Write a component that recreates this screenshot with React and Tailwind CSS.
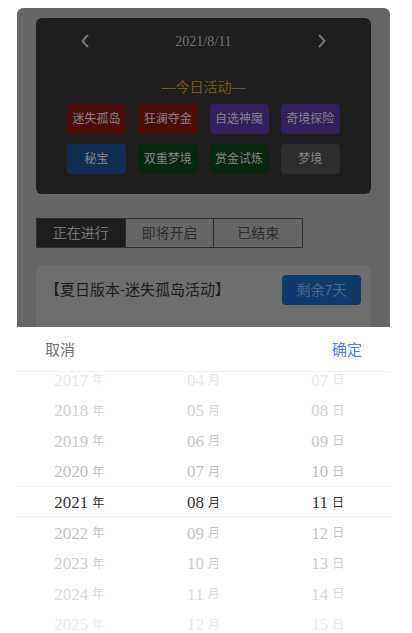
const sans = { fontFamily: '"Liberation Sans", "Noto Sans CJK SC", sans-serif' };
const serif = { fontFamily: '"Liberation Serif", "Noto Sans CJK SC", serif' };

const tags = [
    { name: '迷失孤岛', bg: 'bg-[#4b0b0b]' },
    { name: '狂澜夺金', bg: 'bg-[#4b0b0b]' },
    { name: '自选神魔', bg: 'bg-[#321f5e]' },
    { name: '奇境探险', bg: 'bg-[#321f5e]' },
    { name: '秘宝', bg: 'bg-[#0f2e56]' },
    { name: '双重梦境', bg: 'bg-[#04270f]' },
    { name: '赏金试炼', bg: 'bg-[#04270f]' },
    { name: '梦境', bg: 'bg-[#2d2d2d]' },
];

const rowColors = ['text-[#e6e6e6]', 'text-[#d3d3d3]', 'text-[#c9c9c9]', 'text-[#bdbdbd]', 'text-[#333333]', 'text-[#c3c3c3]', 'text-[#cdcdcd]', 'text-[#dadada]', 'text-[#ebebeb]'];

const columns = [
    { unit: '年', items: ['2017', '2018', '2019', '2020', '2021', '2022', '2023', '2024', '2025'] },
    { unit: '月', items: ['04', '05', '06', '07', '08', '09', '10', '11', '12'] },
    { unit: '日', items: ['07', '08', '09', '10', '11', '12', '13', '14', '15'] },
];

const Chevron = ({ dir }) => (
    <svg width="10" height="14" viewBox="0 0 10 14" fill="none">
        <polyline
            points={dir === 'left' ? '7.5,1.5 2.5,7 7.5,12.5' : '2.5,1.5 7.5,7 2.5,12.5'}
            stroke="#767676"
            strokeWidth="2"
            strokeLinecap="round"
            strokeLinejoin="round"
        />
    </svg>
);

const App = () => {
    return (
        <div className="w-[412px] h-[633px] bg-white overflow-hidden" style={sans}>
            <div className="relative ml-[17px] mt-[8px] w-[373px] h-[625px] bg-[#666666] rounded-t-[6px] overflow-hidden">
                <div className="px-[19px] pt-[10px]">
                    {/* calendar card */}
                    <div className="h-[176px] rounded-[6px] bg-[#1e1e1e] pt-[8px]">
                        <div className="h-[30px] px-[44px] flex items-center justify-between">
                            <Chevron dir="left" />
                            <span className="text-[14px] text-[#747474]" style={serif}>2021/8/11</span>
                            <Chevron dir="right" />
                        </div>
                        <div className="mt-[21px] h-[20px] leading-[20px] text-center text-[14px] text-[#775b0e]">—今日活动—</div>
                        <div className="mt-[7px] px-[31px] grid grid-cols-4 gap-x-[12px] gap-y-[10px]">
                            {tags.map((t) => (
                                <div key={t.name} className={`${t.bg} h-[30px] rounded-[4px] flex items-center justify-center text-[12px] text-[#858585]`}>
                                    {t.name}
                                </div>
                            ))}
                        </div>
                    </div>

                    {/* tabs */}
                    <div className="mt-[24px] w-[267px] h-[30px] flex border border-[#2e2e2e] text-[14px]">
                        <div className="flex-1 bg-[#1e1e1e] text-[#787878] flex items-center justify-center">正在进行</div>
                        <div className="flex-1 border-l border-[#2e2e2e] text-[#2c2c2c] flex items-center justify-center">即将开启</div>
                        <div className="flex-1 border-l border-[#2e2e2e] text-[#2c2c2c] flex items-center justify-center">已结束</div>
                    </div>

                    {/* activity card */}
                    <div className="mt-[17px] h-[120px] rounded-[6px] bg-[#6e6e6e] pl-[9px] pr-[10px] pt-[10px]">
                        <div className="flex items-center justify-between">
                            <span className="text-[15px] text-[#1c1c1c]">【夏日版本-迷失孤岛活动】</span>
                            <div className="w-[79px] h-[30px] rounded-[4px] bg-[#0f3b6c] text-[14px] text-[#4b6787] flex items-center justify-center">剩余7天</div>
                        </div>
                    </div>
                </div>

                {/* date picker sheet */}
                <div className="absolute left-0 right-0 top-[319px] bottom-0 bg-white">
                    <div className="h-[45px] pt-[3px] px-[28px] flex items-center justify-between border-b border-[#f3f3f3] text-[15px]">
                        <span className="text-[#6f6f6f]">取消</span>
                        <span className="text-[#5b76f2]">确定</span>
                    </div>
                    <div className="relative h-[260px] overflow-hidden">
                        <div className="flex mt-[-7px]">
                            {columns.map((col) => (
                                <div key={col.unit} className="flex-1">
                                    {col.items.map((v, i) => (
                                        <div key={v} className={`h-[30.6px] flex items-center justify-center gap-[4px] ${rowColors[i]}`}>
                                            <span className="text-[17px]" style={serif}>{v}</span>
                                            <span className="text-[12px]">{col.unit}</span>
                                        </div>
                                    ))}
                                </div>
                            ))}
                        </div>
                        <div className="absolute left-0 right-0 top-[114px] h-[30.6px] border-y border-[#f1f1f1]"></div>
                    </div>
                </div>
            </div>
        </div>
    );
};

export default App;
